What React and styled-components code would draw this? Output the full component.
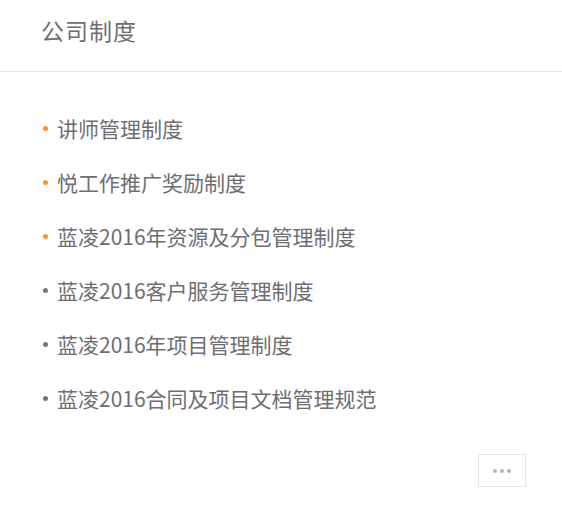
import React from 'react'
import styled, { createGlobalStyle } from 'styled-components'

const GlobalStyle = createGlobalStyle`
  body {
    margin: 0;
    background: #fff;
    font-family: "Microsoft YaHei", "Noto Sans CJK SC", "Noto Sans", sans-serif;
  }
`

const items = [
  { title: '讲师管理制度', hot: true },
  { title: '悦工作推广奖励制度', hot: true },
  { title: '蓝凌2016年资源及分包管理制度', hot: true },
  { title: '蓝凌2016客户服务管理制度', hot: false },
  { title: '蓝凌2016年项目管理制度', hot: false },
  { title: '蓝凌2016合同及项目文档管理规范', hot: false },
]

const App = () => {
  return (
    <Wrapper>
      <GlobalStyle />
      <Header>
        <Title>公司制度</Title>
      </Header>
      <List>
        {items.map((item) => (
          <Item key={item.title}>
            <Dot $hot={item.hot} />
            <ItemText>{item.title}</ItemText>
          </Item>
        ))}
      </List>
      <Footer>
        <MoreButton>
          <span />
          <span />
          <span />
        </MoreButton>
      </Footer>
    </Wrapper>
  )
}

const Wrapper = styled.section`
  width: 562px;
  height: 514px;
  background: #fff;
  display: flex;
  flex-direction: column;
`

const Header = styled.div`
  height: 72px;
  box-sizing: border-box;
  border-bottom: 1px solid #e6e6e6;
  display: flex;
  align-items: center;
  padding-left: 41px;
`

const Title = styled.h2`
  margin: 0 0 10px;
  font-size: 23px;
  line-height: 1;
  font-weight: normal;
  letter-spacing: 1px;
  color: #6e6e72;
`

const List = styled.ul`
  list-style: none;
  margin: 0;
  padding: 29px 0 0 43px;
`

const Item = styled.li`
  height: 54px;
  display: flex;
  align-items: center;
`

const Dot = styled.i`
  width: 5px;
  height: 5px;
  border-radius: 50%;
  background: ${(p) => (p.$hot ? '#f7962f' : '#77777a')};
  margin-right: 9px;
  flex-shrink: 0;
`

const ItemText = styled.span`
  font-size: 21px;
  line-height: 1;
  color: #6e6e72;
`

const Footer = styled.div`
  display: flex;
  justify-content: flex-end;
  padding: 29px 36px 0 0;
`

const MoreButton = styled.button`
  width: 48px;
  height: 33px;
  border: 1px solid #e5e5e5;
  background: #fff;
  display: flex;
  align-items: center;
  justify-content: center;
  gap: 3px;
  padding: 0;
  cursor: pointer;

  span {
    width: 4px;
    height: 4px;
    border-radius: 50%;
    background: #b4b4b4;
  }
`

export default App
